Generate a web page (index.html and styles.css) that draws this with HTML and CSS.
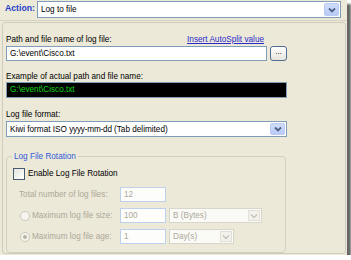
FILE: index.html
```html
<!DOCTYPE html>
<html>
<head>
<meta charset="utf-8">
<link rel="stylesheet" href="styles.css">
</head>
<body>
<div class="shot">
  <div class="toprow">
    <span class="action">Action:</span>
    <div class="combo combo-top">
      <span class="combo-text">Log to file</span>
      <span class="arrowbtn"><svg width="8" height="6" viewBox="0 0 8 6"><path d="M1 1.5 L4 4.5 L7 1.5" fill="none" stroke="#4D6185" stroke-width="1.8"/></svg></span>
    </div>
  </div>
  <div class="sep"></div>
  <div class="panel">
    <div class="row-label">
      <span>Path and file name of log file:</span>
      <a class="link" href="#">Insert AutoSplit value</a>
    </div>
    <div class="inputrow">
      <div class="textbox path">G:\event\Cisco.txt</div>
      <div class="dots">...</div>
    </div>
    <div class="lbl lbl2">Example of actual path and file name:</div>
    <div class="blackbox">G:\event\Cisco.txt</div>
    <div class="lbl lbl3">Log file format:</div>
    <div class="combo combo-format">
      <span class="combo-text">Kiwi format ISO <i>yyyy-mm-dd</i> (Tab delimited)</span>
      <span class="arrowbtn"><svg width="8" height="6" viewBox="0 0 8 6"><path d="M1 1.5 L4 4.5 L7 1.5" fill="none" stroke="#4D6185" stroke-width="1.8"/></svg></span>
    </div>
    <div class="group">
      <span class="legend">Log File Rotation</span>
      <div class="checkrow">
        <span class="checkbox"></span>
        <span>Enable Log File Rotation</span>
      </div>
      <div class="grid">
        <span class="dlabel plain">Total number of log files:</span>
        <div class="dbox">12</div>
        <span></span>
        <span class="dlabel"><span class="radio"></span>Maximum log file size:</span>
        <div class="dbox">100</div>
        <div class="dcombo wide"><span>B (Bytes)</span><span class="darrow"><svg width="8" height="6" viewBox="0 0 8 6"><path d="M1 1.5 L4 4.5 L7 1.5" fill="none" stroke="#C4C2B6" stroke-width="1.4"/></svg></span></div>
        <span class="dlabel"><span class="radio checked"></span>Maximum log file age:</span>
        <div class="dbox">1</div>
        <div class="dcombo narrow"><span>Day(s)</span><span class="darrow"><svg width="8" height="6" viewBox="0 0 8 6"><path d="M1 1.5 L4 4.5 L7 1.5" fill="none" stroke="#C4C2B6" stroke-width="1.4"/></svg></span></div>
      </div>
    </div>
  </div>
</div>
</body>
</html>
```
FILE: styles.css
```css
html, body {
  margin: 0;
  padding: 0;
  background: #ffffff;
}
body {
  font-family: "Liberation Sans", Arial, sans-serif;
  font-size: 8.2px;
  color: #000;
}
.shot {
  width: 347px;
  height: 255px;
  background: #ECE9D8;
  box-shadow: 4px 4px 2px rgba(0, 0, 0, 0.6);
  overflow: hidden;
}
.toprow {
  height: 19px;
  display: flex;
  align-items: flex-start;
}
.action {
  width: 37px;
  padding-left: 5px;
  box-sizing: border-box;
  font-weight: bold;
  color: #1F3ECB;
  font-size: 8.7px;
  line-height: 17px;
}
.combo {
  position: relative;
  box-sizing: border-box;
  border: 1px solid #7F9DB9;
  background: #fff;
  display: flex;
  align-items: center;
}
.combo-top {
  width: 304px;
  height: 17px;
  margin-top: 1px;
}
.combo-text {
  flex: 1;
  padding-left: 3px;
  white-space: nowrap;
}
.combo-text i {
  font-style: normal;
  letter-spacing: -0.2px;
}
.arrowbtn {
  width: 15px;
  align-self: stretch;
  margin: 1px;
  box-sizing: border-box;
  border: 1px solid #B9CAF3;
  border-radius: 2px;
  background: linear-gradient(#D0DDFB, #B8CBF6);
  display: flex;
  align-items: center;
  justify-content: center;
}
.sep {
  height: 1px;
  background: #D6D3C4;
  margin-top: 1px;
}
.panel {
  box-sizing: border-box;
  margin: 1px 1px 0 2px;
  height: 232px;
  border: 1px solid #CFCCBD;
  border-radius: 3px;
  padding-left: 3px;
}
.row-label {
  margin-top: 11px;
  height: 11px;
  line-height: 11px;
  width: 258px;
  display: flex;
  justify-content: space-between;
}
.link {
  color: #2B2BCC;
  text-decoration: underline;
}
.inputrow {
  margin-top: 1px;
  height: 15px;
  display: flex;
  gap: 3px;
}
.textbox {
  box-sizing: border-box;
  border: 1px solid #7F9DB9;
  background: #fff;
  padding-left: 3px;
  line-height: 13px;
}
.path {
  width: 261px;
}
.dots {
  width: 17px;
  box-sizing: border-box;
  border: 1px solid #4E6C94;
  border-radius: 3px;
  background: linear-gradient(#FFFFFF, #E6E4DC);
  text-align: center;
  line-height: 10px;
  font-size: 8px;
}
.lbl {
  height: 11px;
  line-height: 11px;
}
.lbl2 {
  margin-top: 10px;
}
.lbl3 {
  margin-top: 11px;
}
.blackbox {
  width: 281px;
  height: 16px;
  box-sizing: border-box;
  border: 1px solid #7F9DB9;
  background: #000;
  color: #10D810;
  padding-left: 3px;
  line-height: 14px;
}
.combo-format {
  width: 281px;
  height: 16px;
  margin-top: 1px;
}
.group {
  position: relative;
  box-sizing: border-box;
  width: 280px;
  height: 97px;
  margin-top: 19px;
  border: 1px solid #D2CFC0;
  border-radius: 4px;
  padding-left: 6px;
}
.legend {
  position: absolute;
  left: 5px;
  top: -6px;
  padding: 0 2px;
  background: #ECE9D8;
  color: #2F5BD8;
  line-height: 11px;
}
.checkrow {
  margin-top: 10px;
  height: 13px;
  display: flex;
  align-items: center;
  gap: 3px;
}
.checkbox {
  width: 12px;
  height: 12px;
  box-sizing: border-box;
  border: 1px solid #4A5A70;
  background: linear-gradient(135deg, #E4E3DD, #FFFFFF);
}
.grid {
  margin-top: 7px;
  margin-left: -6px;
  display: grid;
  grid-template-columns: 110px 46px auto;
  grid-auto-rows: 15px;
  row-gap: 6px;
  column-gap: 3px;
  color: #ACA899;
}
.dlabel {
  display: flex;
  align-items: center;
  white-space: nowrap;
}
.dlabel.plain {
  padding-left: 12px;
}
.radio {
  width: 10px;
  height: 10px;
  box-sizing: border-box;
  border: 1px solid #CAC8BA;
  border-radius: 50%;
  background: #F6F5F0;
  margin-left: 13px;
  margin-right: 2px;
  position: relative;
}
.radio.checked::after {
  content: "";
  position: absolute;
  left: 2px;
  top: 2px;
  width: 4px;
  height: 4px;
  border-radius: 50%;
  background: #B5B3A6;
}
.dbox {
  box-sizing: border-box;
  border: 1px solid #BFD0EC;
  background: #FDFDFB;
  padding-left: 3px;
  line-height: 13px;
}
.dcombo {
  box-sizing: border-box;
  border: 1px solid #D8D6CB;
  background: #FAFAF7;
  display: flex;
  align-items: center;
  padding-left: 3px;
}
.dcombo span:first-child {
  flex: 1;
}
.dcombo.wide {
  width: 93px;
}
.dcombo.narrow {
  width: 65px;
}
.darrow {
  width: 12px;
  align-self: stretch;
  margin: 1px;
  box-sizing: border-box;
  border: 1px solid #E2E0D6;
  background: #F3F2EC;
  display: flex;
  align-items: center;
  justify-content: center;
}
```
